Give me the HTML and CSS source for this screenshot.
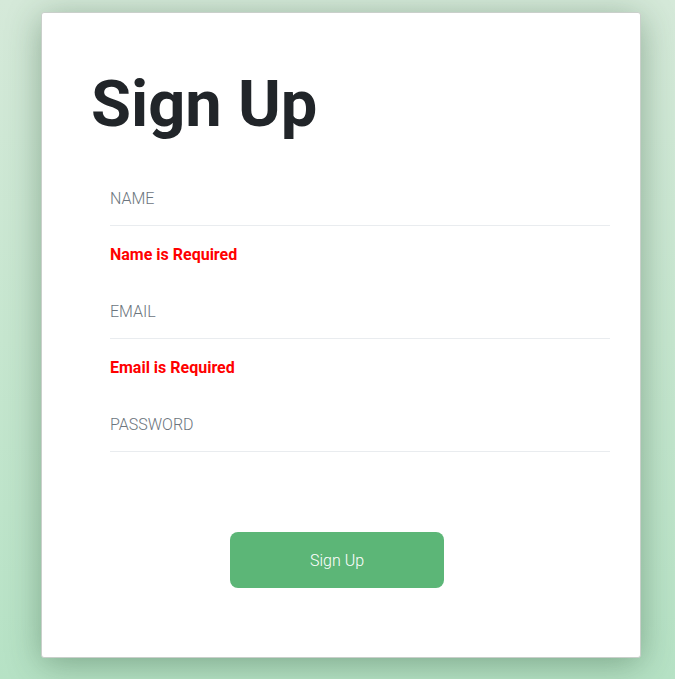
FILE: index.html
```html
<!DOCTYPE html>
<html lang="en">
<head>
<meta charset="utf-8">
<title>Sign Up</title>
<link rel="stylesheet" href="styles.css">
</head>
<body>
<main class="page">
  <section class="card">
    <h1 class="title">Sign Up</h1>
    <form class="form" novalidate>
      <input class="field" type="text" placeholder="NAME">
      <p class="error">Name is Required</p>
      <input class="field" type="email" placeholder="EMAIL">
      <p class="error">Email is Required</p>
      <input class="field" type="password" placeholder="PASSWORD">
      <div class="actions">
        <button class="btn" type="button">Sign Up</button>
      </div>
    </form>
  </section>
</main>
</body>
</html>
```

FILE: styles.css
```css
* { box-sizing: border-box; }

html, body {
  margin: 0;
  height: 100%;
}

body {
  font-family: Roboto, "Liberation Sans", sans-serif;
  background: linear-gradient(to bottom, #d5e9d9 0%, #c6e6cf 50%, #b6e2c5 100%);
  overflow: hidden;
}

.page {
  padding: 12px 0 0 41px;
}

.card {
  width: 600px;
  height: 646px;
  background: #fff;
  border: 1px solid #c9cfca;
  border-radius: 3px;
  box-shadow: 0 6px 34px rgba(30, 70, 40, 0.38);
  padding: 52px 30px 0 49px;
}

.title {
  margin: 0;
  font-size: 65px;
  line-height: 1.2;
  font-weight: 700;
  color: #212529;
}

.form {
  display: flex;
  flex-direction: column;
  padding: 29px 0 0 19px;
}

.field {
  display: block;
  width: 100%;
  height: 54px;
  border: none;
  border-bottom: 1px solid #e9ecef;
  padding: 0;
  margin: 0;
  font-family: Roboto, "Liberation Sans", sans-serif;
  font-size: 16px;
  font-weight: 300;
  color: #495057;
  background: transparent;
  outline: none;
}

.field::placeholder {
  color: #6c757d;
  opacity: 1;
}

.error {
  margin: 17px 0 18px;
  font-size: 16px;
  line-height: 24px;
  font-weight: 700;
  color: #ff0000;
}

.actions {
  padding: 80px 0 0 120px;
}

.btn {
  width: 214px;
  height: 56px;
  border: none;
  border-radius: 8px;
  background: #5cb677;
  color: #fff;
  font-family: Roboto, "Liberation Sans", sans-serif;
  font-size: 16px;
  font-weight: 300;
  cursor: pointer;
}
```
